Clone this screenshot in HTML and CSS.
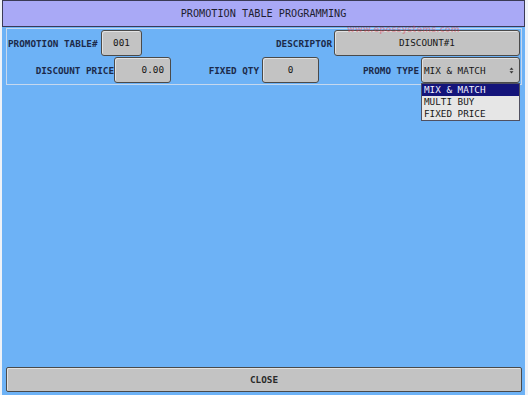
FILE: index.html
```html
<!DOCTYPE html>
<html>
<head>
<meta charset="utf-8">
<link rel="stylesheet" href="styles.css">
</head>
<body>
<div class="app">
  <div class="title">PROMOTION TABLE PROGRAMMING</div>
  <div class="panel">
    <div class="row row1">
      <span class="lbl l-tbl">PROMOTION TABLE#</span>
      <div class="btn b-tbl">001</div>
      <span class="lbl l-desc">DESCRIPTOR</span>
      <div class="btn b-desc">DISCOUNT#1</div>
    </div>
    <div class="row row2">
      <span class="lbl l-price">DISCOUNT PRICE</span>
      <div class="btn b-price">0.00</div>
      <span class="lbl l-qty">FIXED QTY</span>
      <div class="btn b-qty">0</div>
      <span class="lbl l-type">PROMO TYPE</span>
      <div class="select">
        <span class="sel-text">MIX &amp; MATCH</span>
        <svg class="arrow" width="5" height="7" viewBox="0 0 5 7"><path d="M0.5 2.8 L2.5 0.5 L4.5 2.8 Z M0.5 4.2 L2.5 6.5 L4.5 4.2 Z" fill="#333"/></svg>
        <ul class="options">
          <li class="opt active">MIX &amp; MATCH</li>
          <li class="opt">MULTI BUY</li>
          <li class="opt">FIXED PRICE</li>
        </ul>
      </div>
    </div>
    <span class="watermark">www.epossystems.com</span>
  </div>
  <div class="close">CLOSE</div>
</div>
</body>
</html>
```

FILE: styles.css
```css
html, body {
  margin: 0;
  padding: 0;
  background: #eef2f8;
}
body {
  width: 528px;
  height: 395px;
  overflow: hidden;
  font-family: "DejaVu Sans Mono", "Liberation Mono", monospace;
}
.app {
  margin-left: 2px;
  width: 523px;
  height: 395px;
  background: #6db2f6;
  display: flex;
  flex-direction: column;
}
.title {
  height: 25px;
  line-height: 25px;
  border: 1px solid #3a3a55;
  background: #a9a9f6;
  color: #1e1e30;
  text-align: center;
  font-size: 10.2px;
}
.panel {
  position: relative;
  margin: 1px 3px 0 4px;
  border: 1px solid #c6d8ee;
  padding: 1px 1px 1px 0;
  display: flex;
  flex-direction: column;
  gap: 1px;
}
.row {
  display: flex;
  align-items: center;
  height: 26px;
}
.lbl {
  font-size: 9.3px;
  font-weight: bold;
  color: #1c2a4a;
  white-space: nowrap;
}
.btn {
  box-sizing: border-box;
  height: 26px;
  line-height: 24px;
  background: #c3c3c3;
  border: 1px solid #4a4a4a;
  border-radius: 3px;
  box-shadow: inset 1px 1px 0 #e2e2e2;
  color: #161616;
  font-size: 9.3px;
  text-align: center;
}
.l-tbl { width: 93px; padding-left: 1px; }
.b-tbl { width: 41px; }
.l-desc { flex: 1; text-align: right; padding-right: 2px; }
.b-desc { width: 186px; }
.l-price { width: 107px; text-align: right; }
.b-price { width: 57px; text-align: right; padding-right: 6px; }
.l-qty { width: 88px; padding-right: 3px; text-align: right; }
.b-qty { width: 57px; }
.l-type { width: 100px; padding-right: 2px; text-align: right; }
.select {
  position: relative;
  box-sizing: border-box;
  width: 99px;
  height: 26px;
  background: #c3c3c3;
  border: 1px solid #4a4a4a;
  border-radius: 3px;
  box-shadow: inset 1px 1px 0 #e2e2e2;
  display: flex;
  align-items: center;
  justify-content: space-between;
  padding: 0 5px 0 2px;
}
.sel-text {
  font-size: 9.3px;
  color: #161616;
}
.arrow { display: block; }
.options {
  position: absolute;
  left: -1px;
  top: 25px;
  width: 99px;
  box-sizing: border-box;
  margin: 0;
  padding: 0;
  list-style: none;
  background: #e6e6e6;
  border: 1px solid #505060;
}
.opt {
  height: 12px;
  line-height: 12px;
  padding-left: 2px;
  font-size: 9.3px;
  color: #161616;
}
.opt.active {
  background: #14147a;
  color: #f0f0ff;
}
.watermark {
  position: absolute;
  left: 340px;
  top: -5px;
  font-family: "DejaVu Sans", sans-serif;
  font-size: 8.6px;
  font-weight: bold;
  color: rgba(225, 60, 80, 0.4);
}
.close {
  margin: auto 3px 3px 4px;
  box-sizing: border-box;
  height: 25px;
  line-height: 23px;
  background: #c3c3c3;
  border: 1px solid #4a4a4a;
  border-radius: 2px;
  box-shadow: inset 1px 1px 0 #e2e2e2;
  text-align: center;
  font-size: 9.3px;
  font-weight: bold;
  color: #2a2a2a;
}
```
